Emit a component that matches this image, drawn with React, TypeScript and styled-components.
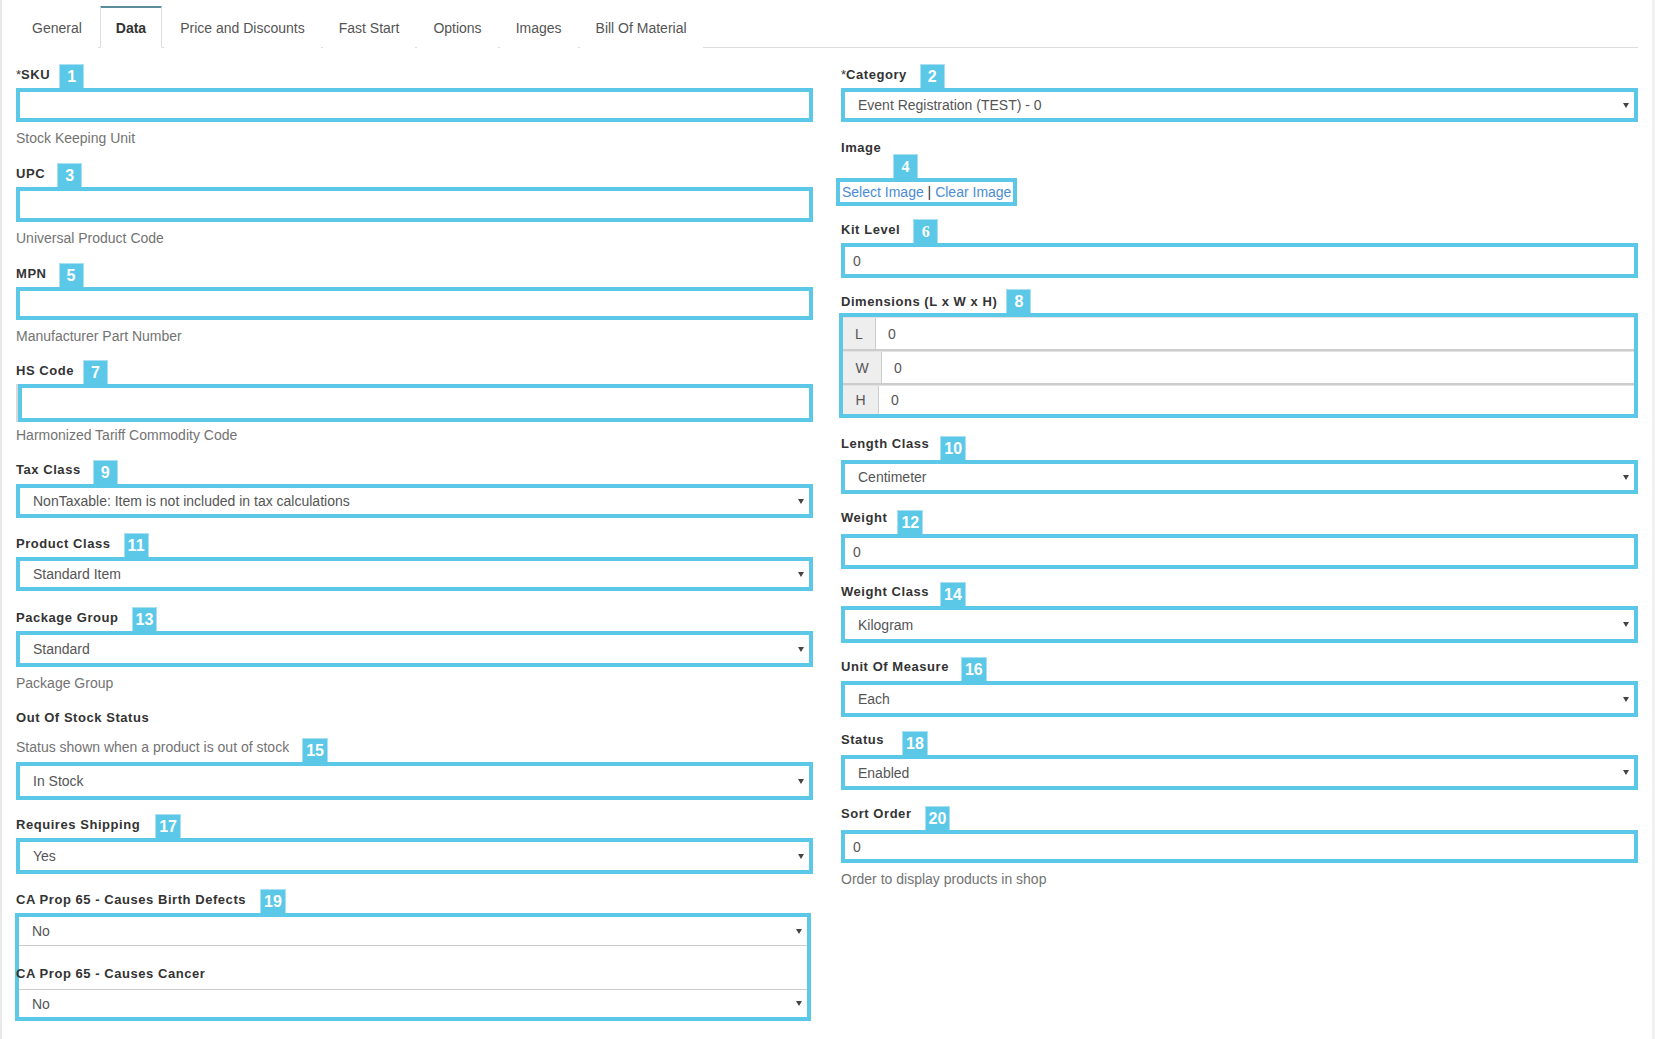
import React from "react";
import styled, { createGlobalStyle } from "styled-components";

const BLUE = "#5bc8e8";

const Global = createGlobalStyle`
  * { box-sizing: border-box; }
  html, body { margin: 0; padding: 0; background: #fff; }
  body { font-family: "Liberation Sans", Arial, sans-serif; color: #333; }
`;

const Page = styled.div`
  width: 100%;
  min-height: 1039px;
  border-left: 2px solid #e9e9e9;
  border-right: 3px solid #f1f1f1;
  padding: 6px 14px 0 14px;
`;

const TabBar = styled.nav`
  display: flex;
  border-bottom: 1px solid #ddd;
`;

const Tab = styled.div<{ $active?: boolean }>`
  padding: 11px 15px 9px;
  margin-right: 2px;
  margin-bottom: -1px;
  line-height: 20px;
  font-size: 14px;
  border: 1px solid transparent;
  color: #555;
  background: #fff;
  ${(p) =>
    p.$active &&
    `
    border-color: #ddd;
    border-top-color: #5a8c9e;
    border-bottom-color: #fff;
    box-shadow: inset 0 1px 0 #5a8c9e;
    color: #333;
    font-weight: bold;
  `}
`;

const FormGrid = styled.div`
  display: grid;
  grid-template-columns: 1fr 1fr;
  column-gap: 28px;
  margin-top: 16px;
`;

const Column = styled.div`
  display: flex;
  flex-direction: column;
`;

const Group = styled.div<{ $mb?: number }>`
  display: flex;
  flex-direction: column;
  margin-bottom: ${(p) => (p.$mb ?? 15)}px;
`;

const LabelRow = styled.div`
  display: flex;
  align-items: flex-end;
  min-height: 24px;
`;

const Label = styled.span<{ $lift?: number }>`
  align-self: flex-start;
  margin-top: ${(p) => 2 - (p.$lift ?? 0)}px;
  font-size: 13px;
  font-weight: bold;
  letter-spacing: 0.55px;
  line-height: 18px;
  color: #333;
`;

const PlainLabel = styled.div`
  margin-top: 2px;
  font-size: 13px;
  font-weight: bold;
  letter-spacing: 0.55px;
  line-height: 18px;
  color: #333;
`;

const Star = styled.span`
  font-weight: normal;
  letter-spacing: 0;
`;

const Badge = styled.span<{ $gap: number; $serif?: boolean; $top?: number }>`
  display: inline-block;
  align-self: flex-end;
  margin-left: ${(p) => p.$gap}px;
  margin-top: ${(p) => p.$top ?? 0}px;
  min-width: 25px;
  height: 24px;
  padding: 0 3px;
  background: ${BLUE};
  border: 1px solid #a9e1f2;
  border-bottom: none;
  color: #fff;
  font-family: ${(p) =>
    p.$serif ? '"Liberation Serif", "Times New Roman", serif' : '"Liberation Sans", Arial, sans-serif'};
  font-weight: bold;
  font-size: 16px;
  line-height: 23px;
  text-align: center;
`;

const TextInput = styled.input<{ $h?: number }>`
  display: block;
  width: 100%;
  height: ${(p) => p.$h ?? 34}px;
  border: 4px solid ${BLUE};
  padding: 0 8px;
  font-family: "Liberation Sans", Arial, sans-serif;
  font-size: 14px;
  color: #555;
  background: #fff;
  outline: none;
`;

const ShiftedInput = styled(TextInput)`
  width: calc(100% - 2px);
  margin-left: 2px;
  margin-bottom: -3px;
  box-shadow: -2px 0 0 #d9d9d9;
`;

const SelectBox = styled.div<{ $h?: number }>`
  display: flex;
  align-items: center;
  justify-content: space-between;
  height: ${(p) => p.$h ?? 34}px;
  border: 4px solid ${BLUE};
  padding: 0 4px 0 13px;
  font-size: 14px;
  color: #555;
  background: #fff;
`;

const Caret = styled.span`
  width: 0;
  height: 0;
  border-left: 3px solid transparent;
  border-right: 3px solid transparent;
  border-top: 5px solid #444;
  margin-right: 1px;
`;

const Help = styled.div`
  font-size: 14px;
  line-height: 20px;
  color: #737373;
  margin-top: 6px;
`;

const HelpRow = styled.div`
  display: flex;
  align-items: flex-start;
  margin-top: 5px;
`;

const HelpInline = styled.span`
  font-size: 14px;
  line-height: 20px;
  color: #737373;
`;

const BadgeRow = styled.div`
  display: flex;
  margin-top: -3px;
`;

const LinkBox = styled.div`
  align-self: flex-start;
  margin-left: -5px;
  border: 4px solid ${BLUE};
  padding: 0 2px;
  font-size: 14px;
  line-height: 20px;
  background: #fff;
`;

const Link = styled.a`
  color: #4a8cd6;
  text-decoration: none;
`;

const Sep = styled.span`
  color: #333;
`;

const DimBox = styled.div`
  border: 4px solid ${BLUE};
  display: flex;
  flex-direction: column;
  margin-left: -2px;
`;

const DimRow = styled.div<{ $h: number; $last?: boolean }>`
  display: flex;
  height: ${(p) => p.$h}px;
  border-top: 1px solid #e2e2e2;
  border-bottom: ${(p) => (p.$last ? "0" : "2px solid #ccc")};
`;

const Addon = styled.span<{ $w: number }>`
  width: ${(p) => p.$w}px;
  flex: none;
  display: flex;
  align-items: center;
  justify-content: center;
  background: #eee;
  border-right: 1px solid #ccc;
  color: #555;
  font-size: 14px;
`;

const DimInput = styled.input`
  flex: 1;
  border: none;
  outline: none;
  padding: 0 12px;
  font-family: "Liberation Sans", Arial, sans-serif;
  font-size: 14px;
  color: #555;
  background: #fff;
`;

const CombinedBox = styled.div`
  border: 4px solid ${BLUE};
  margin-left: -1px;
  margin-right: 2px;
  display: flex;
  flex-direction: column;
`;

const SubSelect = styled.div<{ $pos: "top" | "bottom" }>`
  display: flex;
  align-items: center;
  justify-content: space-between;
  height: ${(p) => (p.$pos === "top" ? 29 : 28)}px;
  padding: 0 4px 0 13px;
  font-size: 14px;
  color: #555;
  ${(p) => (p.$pos === "top" ? "border-bottom: 1px solid #ccc;" : "border-top: 1px solid #ccc;")}
`;

const SubLabel = styled.div`
  height: 43px;
  padding-top: 19px;
  margin-left: -3px;
  font-size: 13px;
  font-weight: bold;
  letter-spacing: 0.55px;
  line-height: 18px;
  color: #333;
`;

type HeadProps = { label: React.ReactNode; badge?: string; gap?: number; serif?: boolean; lift?: number };

function Head({ label, badge, gap = 12, serif, lift }: HeadProps) {
  return (
    <LabelRow>
      <Label $lift={lift}>{label}</Label>
      {badge && (
        <Badge $gap={gap} $serif={serif}>
          {badge}
        </Badge>
      )}
    </LabelRow>
  );
}

function Select({ value, h }: { value: string; h?: number }) {
  return (
    <SelectBox $h={h}>
      <span>{value}</span>
      <Caret />
    </SelectBox>
  );
}

const tabs = ["General", "Data", "Price and Discounts", "Fast Start", "Options", "Images", "Bill Of Material"];

export default function App() {
  return (
    <>
      <Global />
      <Page>
        <TabBar>
          {tabs.map((t) => (
            <Tab key={t} $active={t === "Data"}>
              {t}
            </Tab>
          ))}
        </TabBar>
        <FormGrid>
          <Column>
            <Group>
              <Head label={<><Star>*</Star>SKU</>} badge="1" gap={9} />
              <TextInput readOnly value="" />
              <Help>Stock Keeping Unit</Help>
            </Group>
            <Group>
              <Head label="UPC" badge="3" gap={12} />
              <TextInput readOnly value="" $h={35} />
              <Help>Universal Product Code</Help>
            </Group>
            <Group $mb={14}>
              <Head label="MPN" badge="5" gap={12} />
              <TextInput readOnly value="" $h={33} />
              <Help>Manufacturer Part Number</Help>
            </Group>
            <Group>
              <Head label="HS Code" badge="7" gap={9} />
              <ShiftedInput readOnly value="" $h={38} />
              <Help>Harmonized Tariff Commodity Code</Help>
            </Group>
            <Group>
              <Head label="Tax Class" badge="9" gap={12} lift={1} />
              <Select value="NonTaxable: Item is not included in tax calculations" />
            </Group>
            <Group $mb={16}>
              <Head label="Product Class" badge="11" gap={13} />
              <Select value="Standard Item" />
            </Group>
            <Group>
              <Head label="Package Group" badge="13" gap={13} />
              <Select value="Standard" h={36} />
              <Help>Package Group</Help>
            </Group>
            <Group $mb={14}>
              <Head label="Out Of Stock Status" lift={1} />
              <HelpRow>
                <HelpInline>Status shown when a product is out of stock</HelpInline>
                <Badge $gap={13} $top={1}>15</Badge>
              </HelpRow>
              <Select value="In Stock" h={38} />
            </Group>
            <Group>
              <Head label="Requires Shipping" badge="17" gap={15} />
              <Select value="Yes" h={36} />
            </Group>
            <Group>
              <Head label="CA Prop 65 - Causes Birth Defects" badge="19" gap={14} />
              <CombinedBox>
                <SubSelect $pos="top">
                  <span>No</span>
                  <Caret />
                </SubSelect>
                <SubLabel>CA Prop 65 - Causes Cancer</SubLabel>
                <SubSelect $pos="bottom">
                  <span>No</span>
                  <Caret />
                </SubSelect>
              </CombinedBox>
            </Group>
          </Column>

          <Column>
            <Group>
              <Head label={<><Star>*</Star>Category</>} badge="2" gap={13} />
              <Select value="Event Registration (TEST) - 0" />
            </Group>
            <Group $mb={13}>
              <PlainLabel>Image</PlainLabel>
              <BadgeRow>
                <Badge $gap={52} $serif>4</Badge>
              </BadgeRow>
              <LinkBox>
                <Link href="#">Select Image</Link> <Sep>|</Sep> <Link href="#">Clear Image</Link>
              </LinkBox>
            </Group>
            <Group $mb={11}>
              <Head label="Kit Level" badge="6" gap={13} serif />
              <TextInput readOnly value="0" $h={35} />
            </Group>
            <Group $mb={18}>
              <Head label="Dimensions (L x W x H)" badge="8" gap={9} lift={-2} />
              <DimBox>
                <DimRow $h={34}>
                  <Addon $w={33}>L</Addon>
                  <DimInput readOnly value="0" />
                </DimRow>
                <DimRow $h={34}>
                  <Addon $w={39}>W</Addon>
                  <DimInput readOnly value="0" />
                </DimRow>
                <DimRow $h={29} $last>
                  <Addon $w={36}>H</Addon>
                  <DimInput readOnly value="0" />
                </DimRow>
              </DimBox>
            </Group>
            <Group $mb={16}>
              <Head label="Length Class" badge="10" gap={11} lift={3} />
              <Select value="Centimeter" h={34} />
            </Group>
            <Group $mb={13}>
              <Head label="Weight" badge="12" gap={10} lift={3} />
              <TextInput readOnly value="0" $h={35} />
            </Group>
            <Group $mb={14}>
              <Head label="Weight Class" badge="14" gap={11} lift={1} />
              <Select value="Kilogram" h={37} />
            </Group>
            <Group $mb={14}>
              <Head label="Unit Of Measure" badge="16" gap={12} lift={1} />
              <Select value="Each" h={36} />
            </Group>
            <Group $mb={16}>
              <Head label="Status" badge="18" gap={18} lift={2} />
              <Select value="Enabled" h={35} />
            </Group>
            <Group>
              <Head label="Sort Order" badge="20" gap={13} lift={3} />
              <TextInput readOnly value="0" $h={33} />
              <Help>Order to display products in shop</Help>
            </Group>
          </Column>
        </FormGrid>
      </Page>
    </>
  );
}
